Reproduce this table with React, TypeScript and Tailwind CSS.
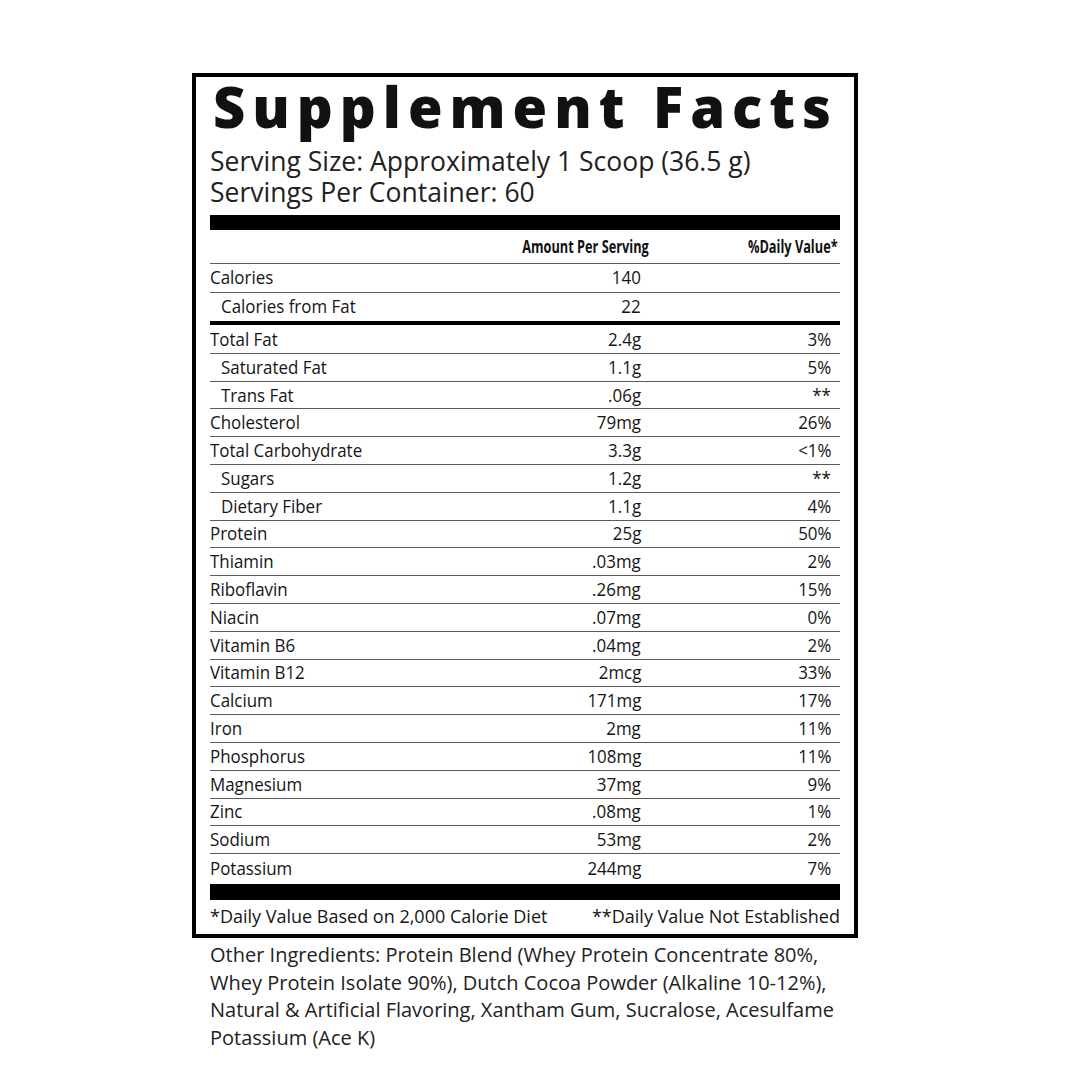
import React from 'react'

type Row = { name: string; amount: string; dv: string; indent?: boolean }

const rows: Row[] = [
  { name: 'Total Fat', amount: '2.4g', dv: '3%' },
  { name: 'Saturated Fat', amount: '1.1g', dv: '5%', indent: true },
  { name: 'Trans Fat', amount: '.06g', dv: '**', indent: true },
  { name: 'Cholesterol', amount: '79mg', dv: '26%' },
  { name: 'Total Carbohydrate', amount: '3.3g', dv: '<1%' },
  { name: 'Sugars', amount: '1.2g', dv: '**', indent: true },
  { name: 'Dietary Fiber', amount: '1.1g', dv: '4%', indent: true },
  { name: 'Protein', amount: '25g', dv: '50%' },
  { name: 'Thiamin', amount: '.03mg', dv: '2%' },
  { name: 'Riboflavin', amount: '.26mg', dv: '15%' },
  { name: 'Niacin', amount: '.07mg', dv: '0%' },
  { name: 'Vitamin B6', amount: '.04mg', dv: '2%' },
  { name: 'Vitamin B12', amount: '2mcg', dv: '33%' },
  { name: 'Calcium', amount: '171mg', dv: '17%' },
  { name: 'Iron', amount: '2mg', dv: '11%' },
  { name: 'Phosphorus', amount: '108mg', dv: '11%' },
  { name: 'Magnesium', amount: '37mg', dv: '9%' },
  { name: 'Zinc', amount: '.08mg', dv: '1%' },
  { name: 'Sodium', amount: '53mg', dv: '2%' },
  { name: 'Potassium', amount: '244mg', dv: '7%' },
]

// label type is a condensed face; squeeze Open Sans a little to get there
const FactRow = ({ row, h = 'h-[27.8px]', last }: { row: Row; h?: string; last?: boolean }) => (
  <div className={`flex items-center ${h} text-[18px] text-[#151515] font-['Open_Sans',sans-serif] ${last ? '' : 'border-b border-[#5a5a5a]'}`}>
    <span className="flex-1">
      <span className={`inline-block origin-left scale-x-[0.94] ${row.indent ? 'ml-[11px]' : ''}`}>{row.name}</span>
    </span>
    <span className="w-[120px] text-right">
      <span className="inline-block origin-right scale-x-[0.94]">{row.amount}</span>
    </span>
    <span className="w-[199px] text-right pr-[9px]">
      <span className="inline-block origin-right scale-x-[0.94]">{row.dv}</span>
    </span>
  </div>
)

const App = () => {
  return (
    <div className="min-h-[1080px] bg-white pt-[73px] pl-[192px]">
      <div className="w-[666px] border-4 border-black px-[14px]">
        <h1 className="font-['Open_Sans',sans-serif] font-extrabold text-[56px] leading-[58px] tracking-[7px] text-[#111] pl-[3px] whitespace-nowrap">
          Supplement Facts
        </h1>
        <div className="font-['Open_Sans',sans-serif] text-[26.5px] leading-[31px] text-[#222] mt-[11px] whitespace-nowrap">
          <p>Serving Size: Approximately 1 Scoop (36.5 g)</p>
          <p>Servings Per Container: 60</p>
        </div>

        <div className="h-[15px] bg-black mt-[7px]" />

        <div className="flex items-center h-[34px] border-b border-[#5a5a5a] text-[17px] font-bold text-[#111] font-['Open_Sans',sans-serif]">
          <span className="flex-1" />
          <span className="text-right pr-[2px]">
            <span className="inline-block origin-right scale-x-[0.75]">Amount Per Serving</span>
          </span>
          <span className="w-[189px] text-right pr-[2px]">
            <span className="inline-block origin-right scale-x-[0.75]">%Daily Value*</span>
          </span>
        </div>

        <FactRow row={{ name: 'Calories', amount: '140', dv: '' }} h="h-[28.5px]" />
        <FactRow row={{ name: 'Calories from Fat', amount: '22', dv: '', indent: true }} h="h-[28.5px]" last />
        <div className="h-[4px] bg-black" />

        <div className="pt-[1px]">
          {rows.map((r, i) => (
            <FactRow key={r.name} row={r} last={i === rows.length - 1} />
          ))}
        </div>

        <div className="h-[16px] bg-black mt-[2px]" />
        <div className="flex justify-between items-center h-[34px] font-['Open_Sans',sans-serif] text-[18px] text-[#151515] whitespace-nowrap">
          <span>*Daily Value Based on 2,000 Calorie Diet</span>
          <span>**Daily Value Not Established</span>
        </div>
      </div>
      <p className="w-[650px] pl-[18px] pt-[3px] font-['Open_Sans',sans-serif] text-[20px] leading-[27.7px] text-[#222]">
        Other Ingredients: Protein Blend (Whey Protein Concentrate 80%, Whey Protein Isolate 90%), Dutch Cocoa Powder (Alkaline 10-12%), Natural &amp; Artificial Flavoring, Xantham Gum, Sucralose, Acesulfame Potassium (Ace K)
      </p>
    </div>
  )
}

export default App
